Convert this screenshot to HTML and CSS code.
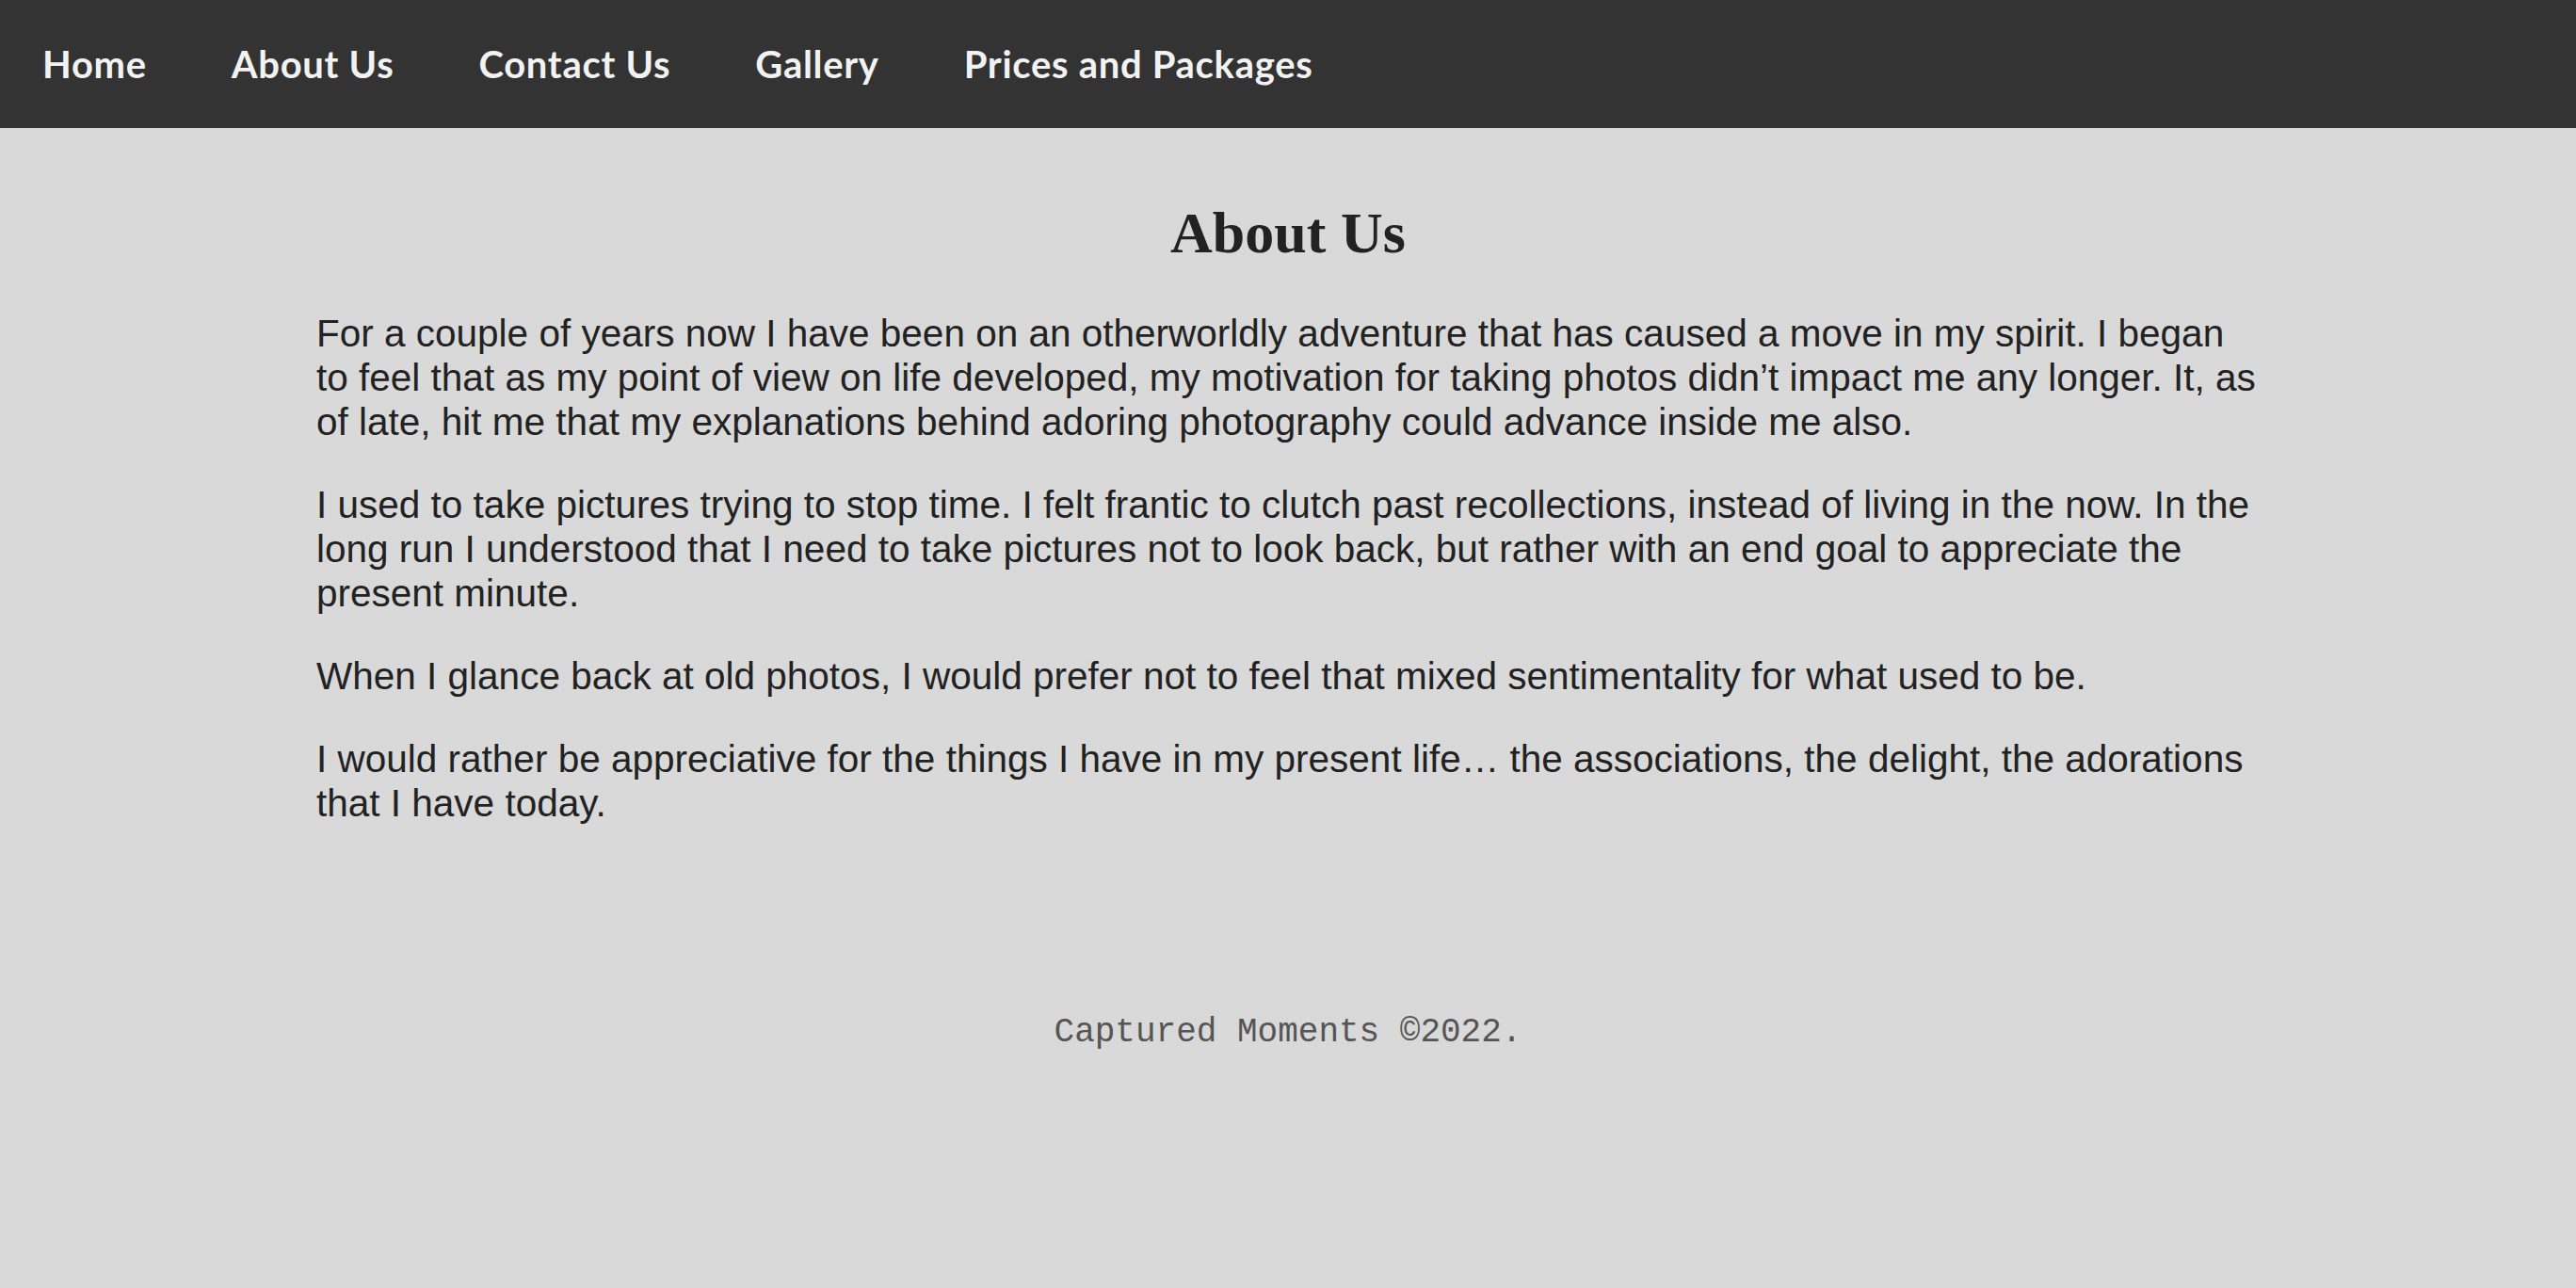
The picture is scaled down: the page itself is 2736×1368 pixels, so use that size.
FILE: index.html
```html
<!DOCTYPE html>
<html lang="en">
<head>
<meta charset="utf-8">
<title>About Us - Captured Moments</title>
<link rel="stylesheet" href="styles.css">
</head>
<body>
<nav class="topnav">
  <a class="nav-link" href="#">Home</a>
  <a class="nav-link" href="#">About Us</a>
  <a class="nav-link" href="#">Contact Us</a>
  <a class="nav-link" href="#">Gallery</a>
  <a class="nav-link" href="#">Prices and Packages</a>
</nav>
<main class="content">
  <h1 class="page-title">About Us</h1>
  <p class="para">For a couple of years now I have been on an otherworldly adventure that has caused a move in my spirit. I began to feel that as my point of view on life developed, my motivation for taking photos didn’t impact me any longer. It, as of late, hit me that my explanations behind adoring photography could advance inside me also.</p>
  <p class="para">I used to take pictures trying to stop time. I felt frantic to clutch past recollections, instead of living in the now. In the long run I understood that I need to take pictures not to look back, but rather with an end goal to appreciate the present minute.</p>
  <p class="para">When I glance back at old photos, I would prefer not to feel that mixed sentimentality for what used to be.</p>
  <p class="para">I would rather be appreciative for the things I have in my present life… the associations, the delight, the adorations that I have today.</p>
</main>
<footer class="footer">Captured Moments ©2022.</footer>
</body>
</html>
```

FILE: styles.css
```css
html, body {
  margin: 0;
  padding: 0;
}
body {
  background: #d9d9d9;
  color: #222222;
  font-family: "Liberation Sans", Arial, sans-serif;
  min-height: 1368px;
}
.topnav {
  display: flex;
  align-items: center;
  height: 136px;
  background: #333333;
}
.nav-link {
  font-family: Lato, "Trebuchet MS", sans-serif;
  font-weight: 700;
  font-size: 40px;
  letter-spacing: 0.7px;
  color: #f2f2f2;
  text-decoration: none;
  padding: 0 45px;
}
.content {
  width: 2064px;
  margin: 0 auto;
  padding-top: 76px;
}
.page-title {
  margin: 0 0 48px;
  text-align: center;
  font-family: "Liberation Serif", Cambria, serif;
  font-weight: 700;
  font-size: 62px;
  color: #222222;
}
.para {
  margin: 0 0 41px;
  font-size: 40.5px;
  line-height: 47px;
}
.footer {
  margin-top: 199px;
  text-align: center;
  font-family: "Liberation Mono", "Courier New", monospace;
  font-size: 36px;
  color: #555555;
}
```
